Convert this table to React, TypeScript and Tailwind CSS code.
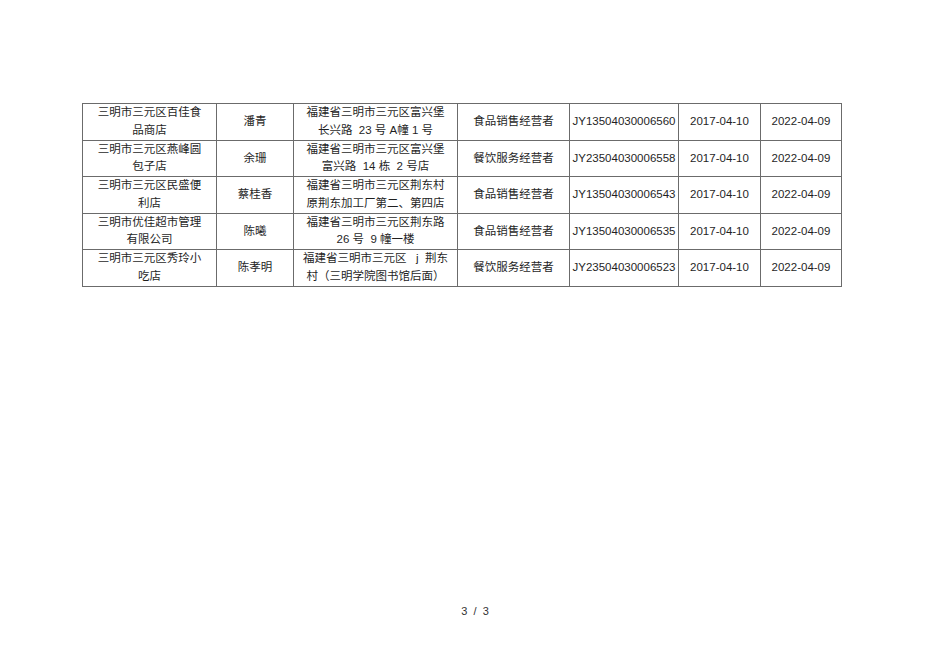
import React from 'react';

type Row = {
  name: string[];
  person: string;
  address: string[];
  kind: string;
  license: string;
  start: string;
  end: string;
};

const rows: Row[] = [
  {
    name: ['三明市三元区百佳食', '品商店'],
    person: '潘青',
    address: ['福建省三明市三元区富兴堡', '长兴路  23 号 A幢 1 号'],
    kind: '食品销售经营者',
    license: 'JY13504030006560',
    start: '2017-04-10',
    end: '2022-04-09',
  },
  {
    name: ['三明市三元区燕峰圆', '包子店'],
    person: '余珊',
    address: ['福建省三明市三元区富兴堡', '富兴路  14 栋  2 号店'],
    kind: '餐饮服务经营者',
    license: 'JY23504030006558',
    start: '2017-04-10',
    end: '2022-04-09',
  },
  {
    name: ['三明市三元区民盛便', '利店'],
    person: '蔡桂香',
    address: ['福建省三明市三元区荆东村', '原荆东加工厂第二、第四店'],
    kind: '食品销售经营者',
    license: 'JY13504030006543',
    start: '2017-04-10',
    end: '2022-04-09',
  },
  {
    name: ['三明市优佳超市管理', '有限公司'],
    person: '陈曦',
    address: ['福建省三明市三元区荆东路', '26 号  9 幢一楼'],
    kind: '食品销售经营者',
    license: 'JY13504030006535',
    start: '2017-04-10',
    end: '2022-04-09',
  },
  {
    name: ['三明市三元区秀玲小', '吃店'],
    person: '陈孝明',
    address: ['福建省三明市三元区   j  荆东', '村（三明学院图书馆后面）'],
    kind: '餐饮服务经营者',
    license: 'JY23504030006523',
    start: '2017-04-10',
    end: '2022-04-09',
  },
];

const cell = 'border border-[#6b6b6b] text-center align-middle p-0 leading-[17.5px] whitespace-pre';

const Lines = ({ lines }: { lines: string[] }) => (
  <>
    {lines.map((l, i) => (
      <div key={i}>{l}</div>
    ))}
  </>
);

export default function App() {
  return (
    <div
      className="w-[950px] h-[672px] bg-white flex flex-col text-[#1f1f1f]"
      style={{ fontFamily: '"Liberation Sans", "Noto Sans CJK SC", sans-serif' }}
    >
      <div className="pt-[103px] pl-[82px]">
        <table className="table-fixed border-collapse w-[759px] text-[11.5px]">
          <colgroup>
            <col className="w-[134px]" />
            <col className="w-[77px]" />
            <col className="w-[164px]" />
            <col className="w-[112px]" />
            <col className="w-[109px]" />
            <col className="w-[82px]" />
            <col className="w-[81px]" />
          </colgroup>
          <tbody>
            {rows.map((r) => (
              <tr key={r.license} className="h-[36.5px]">
                <td className={cell}>
                  <Lines lines={r.name} />
                </td>
                <td className={cell}>{r.person}</td>
                <td className={cell}>
                  <Lines lines={r.address} />
                </td>
                <td className={cell}>{r.kind}</td>
                <td className={cell}>{r.license}</td>
                <td className={cell}>{r.start}</td>
                <td className={cell}>{r.end}</td>
              </tr>
            ))}
          </tbody>
        </table>
      </div>
      <div className="flex-1" />
      <div className="text-center text-[11px] text-[#333] pb-[53px] whitespace-pre">3  /  3</div>
    </div>
  );
}
